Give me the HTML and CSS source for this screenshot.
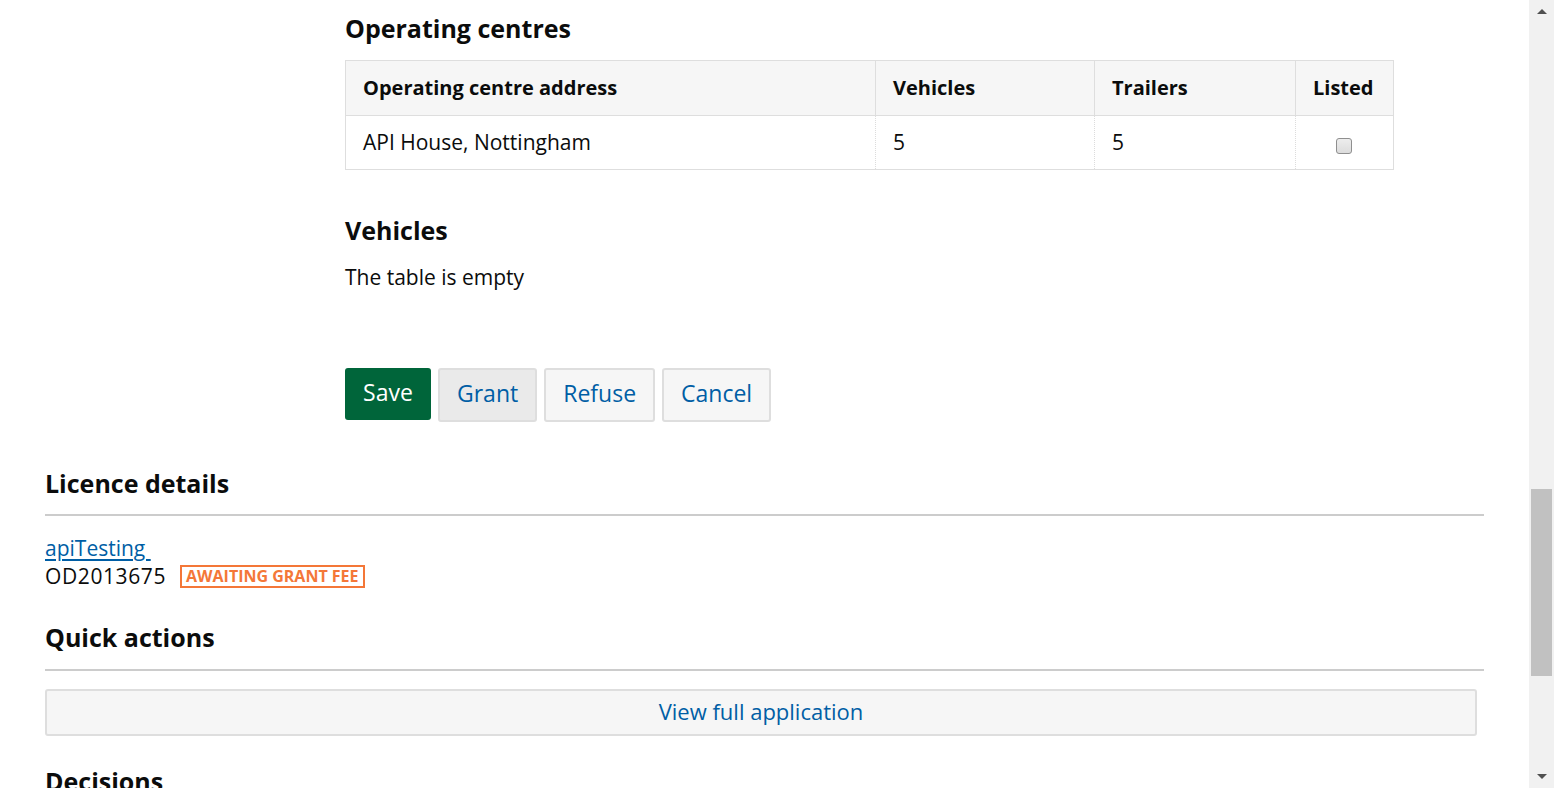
FILE: index.html
```html
<!DOCTYPE html>
<html lang="en">
<head>
<meta charset="utf-8">
<title>Application</title>
<link rel="stylesheet" href="styles.css">
</head>
<body>
<div class="page">
  <section class="main">
    <h2 class="heading heading-first">Operating centres</h2>
    <table class="table">
      <thead>
        <tr>
          <th class="col-address">Operating centre address</th>
          <th class="col-vehicles">Vehicles</th>
          <th class="col-trailers">Trailers</th>
          <th class="col-listed">Listed</th>
        </tr>
      </thead>
      <tbody>
        <tr>
          <td>API House, Nottingham</td>
          <td>5</td>
          <td>5</td>
          <td class="cell-check"><span class="checkbox"></span></td>
        </tr>
      </tbody>
    </table>

    <h2 class="heading heading-vehicles">Vehicles</h2>
    <p class="empty">The table is empty</p>

    <div class="actions">
      <button class="btn btn-save">Save</button>
      <button class="btn btn-grey btn-active">Grant</button>
      <button class="btn btn-grey">Refuse</button>
      <button class="btn btn-grey">Cancel</button>
    </div>
  </section>

  <aside class="side">
    <h2 class="heading side-heading">Licence details</h2>
    <div class="rule"></div>
    <div class="licence">
      <a class="link" href="#">apiTesting </a>
      <div class="licence-row">
        <span class="licence-no">OD2013675</span>
        <span class="badge">AWAITING GRANT FEE</span>
      </div>
    </div>

    <h2 class="heading side-heading quick">Quick actions</h2>
    <div class="rule rule-quick"></div>
    <button class="btn btn-wide">View full application</button>

    <h2 class="heading side-heading decisions">Decisions</h2>
  </aside>
</div>

<div class="scrollbar">
  <span class="arrow arrow-up"></span>
  <span class="thumb"></span>
  <span class="arrow arrow-down"></span>
</div>
</body>
</html>
```

FILE: styles.css
```css
html, body {
  margin: 0;
  padding: 0;
  height: 100%;
  overflow: hidden;
  background: #ffffff;
}

body {
  font-family: "Open Sans", "Noto Sans", "Liberation Sans", sans-serif;
  color: #0b0c0c;
}

.page {
  display: flex;
  flex-direction: column;
  padding-right: 24px;
}

.main {
  padding-left: 345px;
  width: 1049px;
}

.heading {
  font-size: 25px;
  line-height: 30px;
  font-weight: 700;
  margin: 0;
  color: #0b0c0c;
}

.heading-first {
  margin-top: 13px;
}

.table {
  margin-top: 17px;
  width: 1049px;
  border-collapse: collapse;
  border: 1px solid #dedede;
  font-size: 21px;
}

.table th {
  background: #f6f6f6;
  text-align: left;
  font-weight: 700;
  font-size: 20px;
  height: 55px;
  padding: 0 17px 2px;
  border: 1px solid #dedede;
  box-sizing: border-box;
}

.table td {
  height: 54px;
  padding: 0 17px 2px;
  border-left: 1px dotted #dcdcdc;
  border-top: 1px solid #dedede;
  box-sizing: border-box;
}

.col-address { width: 530px; }
.col-vehicles { width: 219px; }
.col-trailers { width: 201px; }

.cell-check {
  text-align: center;
}

.checkbox {
  display: inline-block;
  width: 14px;
  height: 14px;
  border: 1px solid #8f8f8f;
  border-radius: 3px;
  background: linear-gradient(#ededed, #dcdcdc);
  vertical-align: middle;
  margin-top: 4px;
  margin-right: 1px;
}

.heading-vehicles {
  margin-top: 45px;
}

.empty {
  margin: 20px 0 0;
  font-size: 21px;
  line-height: 25px;
}

.actions {
  margin-top: 78px;
  display: flex;
  gap: 7px;
  align-items: flex-start;
}

.btn {
  font-family: inherit;
  font-size: 23px;
  line-height: 28px;
  cursor: pointer;
  border-radius: 3px;
}

.btn-save {
  background: #00653a;
  color: #ffffff;
  border: none;
  height: 52px;
  width: 86px;
  padding: 0 0 5px;
}

.btn-grey {
  background: #f6f6f6;
  color: #005ea5;
  border: 2px solid #dedede;
  height: 54px;
  padding: 0 17px 5px;
}

.btn-active {
  background: #eaeaea;
}

.side {
  margin-top: 46px;
  padding-left: 45px;
  width: 1439px;
}

.rule {
  height: 2px;
  background: #cccccc;
  margin-top: 16px;
}

.rule-quick {
  margin-top: 17px;
}

.licence {
  margin-top: 19px;
  font-size: 21px;
  line-height: 26px;
}

.link {
  color: #005ea5;
  text-decoration: underline;
  text-underline-offset: 3px;
  white-space: pre;
}

.licence-row {
  display: flex;
  align-items: center;
  gap: 14px;
  height: 30px;
}

.licence-no {
  letter-spacing: 0.6px;
}

.badge {
  border: 2px solid #f47738;
  color: #f47738;
  font-weight: 700;
  font-size: 16px;
  line-height: 19px;
  padding: 0 4px;
}

.quick {
  margin-top: 31px;
}

.btn-wide {
  display: block;
  margin-top: 18px;
  width: 1432px;
  height: 47px;
  padding-bottom: 4px;
  background: #f6f6f6;
  color: #005ea5;
  border: 2px solid #dedede;
  font-size: 22px;
}

.decisions {
  margin-top: 30px;
}

.scrollbar {
  position: fixed;
  top: 0;
  right: 0;
  width: 25px;
  height: 788px;
  background: #f1f1f1;
}

.arrow {
  position: absolute;
  left: 8px;
  width: 0;
  height: 0;
  border-left: 5px solid transparent;
  border-right: 5px solid transparent;
}

.arrow-up {
  top: 9px;
  border-bottom: 5px solid #505050;
}

.arrow-down {
  bottom: 9px;
  border-top: 5px solid #505050;
}

.thumb {
  position: absolute;
  left: 2px;
  width: 21px;
  top: 489px;
  height: 187px;
  background: #c1c1c1;
}
```
